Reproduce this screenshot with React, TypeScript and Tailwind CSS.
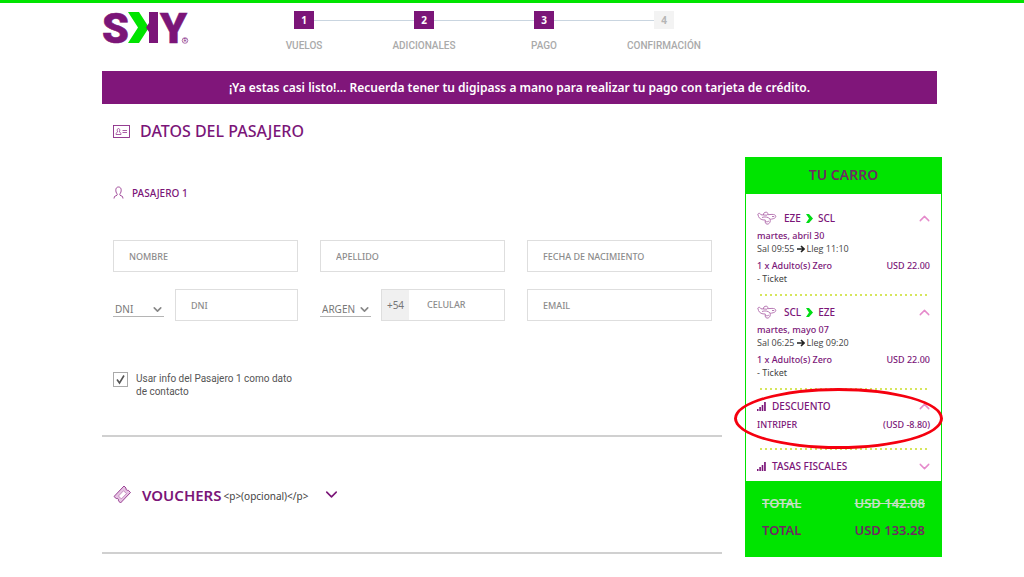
import { ChevronDown, ChevronUp } from "lucide-react";
import type { ReactNode } from "react";

const steps = [
  { id: 1, label: "VUELOS", done: true },
  { id: 2, label: "ADICIONALES", done: true },
  { id: 3, label: "PAGO", done: true },
  { id: 4, label: "CONFIRMACIÓN", done: false },
];

const flights = [
  { from: "EZE", to: "SCL", date: "martes, abril 30", departs: "Sal 09:55", arrives: "Lleg 11:10", price: "USD 22.00" },
  { from: "SCL", to: "EZE", date: "martes, mayo 07", departs: "Sal 06:25", arrives: "Lleg 09:20", price: "USD 22.00" },
];

function Logo() {
  return (
    <svg width="90" height="53" viewBox="0 0 90 53" role="img" aria-label="SKY">
      <g fill="#7b1578" stroke="#7b1578" strokeWidth="0.6" fontFamily="Roboto, sans-serif" fontWeight="900">
        <text x="0" y="40" fontSize="43">S</text>
        <text x="58" y="40" fontSize="43">Y</text>
      </g>
      <path d="M26 9h11l10 15.500L37 40H26l10-15.500z" fill="#00e400" />
      <path d="M47 9h9v31h-9v-11l-3-4.500 3-4.500z" fill="#7b1578" />
      <circle cx="83" cy="37.500" r="2.800" fill="none" stroke="#7b1578" strokeWidth="0.6" />
      <text x="81.500" y="39.300" fontSize="5" fill="#7b1578" fontFamily="Roboto, sans-serif">R</text>
    </svg>
  );
}

function IdCardIcon() {
  return (
    <svg className="shrink-0" width="17" height="13" viewBox="0 0 17 13" fill="none" stroke="#a14f9d" strokeWidth="0.9">
      <rect x="0.5" y="0.5" width="16" height="12" stroke="#8b2a87" />
      <path d="M3 9.5c0-1.6.8-2.4 1.7-2.6C3.8 5.600 4.200 3.500 5.500 3.500s1.700 2.100.8 3.400C7.300 7.100 8 8 8 9.500zM9.500 5.500h4.500M9.500 7.500h4.500" />
    </svg>
  );
}

function PersonIcon() {
  return (
    <svg className="shrink-0" width="11" height="14" viewBox="0 0 11 14" fill="none" stroke="#96398f" strokeWidth="0.9">
      <path d="M1 12.500l.5-2L4 9.200c.4-.3.3-1 0-1.400C2.400 6 2 1 5.500 1S8.600 6 7 7.800c-.3.400-.4 1.100 0 1.400l2.500 1.300.5 2" />
    </svg>
  );
}

function TicketIcon() {
  return (
    <svg className="shrink-0" width="19" height="19" viewBox="0 0 19 19" fill="none" stroke="#9a4395" strokeWidth="1">
      <path d="M1 11.500L11 1l2 2c-.4 1.500.8 2.700 2.300 2.300l2.200 2.200L7.500 18l-2-2.200c.5-1.500-.8-2.800-2.300-2.300z" fill="#e6c4e3" />
      <path d="M5.500 11l5-5.200 3 2.800-5.200 5.300z" strokeWidth="0.500" fill="#fff" />
    </svg>
  );
}

function PlaneIcon() {
  return (
    <svg className="shrink-0" width="20" height="14" viewBox="0 0 20 14" fill="none" stroke="#b06aab" strokeWidth="0.9" strokeLinejoin="round">
      <path d="M.8 3C1.800 1.800 3.200 2.200 4 3.800l2.500.2C6 2.500 7.500 1 9.300 1.200c1.500.2 1.900 1.200 1.200 2.500l4.500-.3c2.500 0 3.800.8 3.800 2 0 1.500-1.800 2.300-4.300 2.700L13 8.300c.8 2-.2 4-1.800 4.700-1.700.5-2.900-.5-3-2l.1-2C5 9.200 2.500 8 1.500 5.500z" />
      <path d="M6.500 4l3.500.2M5 6.500c2.500-1 6-.8 8 1.500M15 5.500h2.200M8.500 10.500c1 .5 2.500.3 3.500-.5" />
    </svg>
  );
}

function BarsIcon() {
  return (
    <svg className="shrink-0" width="9" height="9" viewBox="0 0 9 9" fill="#7b1578">
      <path d="M0 7h1.500v2H0zM2.300 5h1.600v4H2.300zM4.700 3h1.600v6H4.700zM7.100 0h1.700v9H7.100z" />
    </svg>
  );
}

function Field({ label }: { label: string }) {
  return (
    <input
      type="text"
      aria-label={label}
      placeholder={label}
      className="h-8 w-full min-w-0 border border-[#dedede] bg-white px-[15px] text-[9px] font-medium text-[#555] outline-none placeholder:text-[#8c8c8c]"
    />
  );
}

function SmallSelect({ label, value }: { label: string; value: string }) {
  return (
    <div className="mt-3 grid h-4 w-[51px] shrink-0 items-center border-b border-[#b5b5b5]">
      <select
        aria-label={label}
        className="col-start-1 row-start-1 w-full appearance-none bg-transparent pl-[2px] text-[10px] leading-4 text-[#777] outline-none"
      >
        <option>{value}</option>
      </select>
      <ChevronDown className="pointer-events-none col-start-1 row-start-1 justify-self-end text-[#888]" size={13} strokeWidth={3} />
    </div>
  );
}

function DottedLine() {
  return (
    <div className="ml-[3px] h-[2px] bg-[repeating-linear-gradient(90deg,#d6e65c_0_2px,transparent_2px_5px)]" />
  );
}

function CartHeading({ icon, children, open = true }: { icon: ReactNode; children: ReactNode; open?: boolean }) {
  const Chevron = open ? ChevronUp : ChevronDown;

  return (
    <button type="button" className="flex h-4 w-full items-center text-left text-[10px] font-medium text-[#7b1578]">
      {icon}
      {children}
      <Chevron className="-mr-[3px] ml-auto text-[#e58acb]" size={17} strokeWidth={2} />
    </button>
  );
}

function Cart() {
  return (
    <aside className="mt-[53px] w-[197px] shrink-0 border border-[#00e400] bg-white text-[9px] leading-[13px]">
      <h2 className="bg-[#00e400] pb-[2px] text-center text-sm leading-[34px] font-semibold text-[#6f2a62]">TU CARRO</h2>
      <div className="px-[11px] pt-2">
        {flights.map((flight) => (
          <section key={flight.from} className="pt-2">
            <CartHeading icon={<PlaneIcon />}>
              <span className="ml-[7px]">{flight.from}</span>
              <svg className="mx-[5px]" width="7" height="9" viewBox="0 0 7 9" fill="#00dc14">
                <path d="M0 0h3l4 4.500L3 9H0l3-4.500z" />
              </svg>
              <span>{flight.to}</span>
            </CartHeading>
            <p className="mt-[3px] font-medium text-[#7b1578]">{flight.date}</p>
            <p className="flex items-center gap-[2px] font-['Open_Sans',sans-serif] text-[#444]">
              {flight.departs}
              <svg width="8" height="8" viewBox="0 0 8 8" fill="none" stroke="#222" strokeWidth="1.600">
                <path d="M0 4h7M4 1l3 3-3 3" />
              </svg>
              {flight.arrives}
            </p>
            <p className="mt-1 flex justify-between font-medium text-[#7b1578]">
              <span>1 x Adulto(s) Zero</span>
              <span>{flight.price}</span>
            </p>
            <p className="mb-[9px] text-[#444]">- Ticket</p>
            <DottedLine />
          </section>
        ))}
        <section className="relative pt-2">
          <CartHeading icon={<BarsIcon />}>
            <span className="ml-[6px]">DESCUENTO</span>
          </CartHeading>
          <p className="mt-1 mb-[17px] flex justify-between font-medium text-[#7b1578]">
            <span>INTRIPER</span>
            <span>(USD -8.80)</span>
          </p>
          <DottedLine />
          <div className="pointer-events-none absolute -top-[2px] -right-[13px] -left-[23px] h-[61px] rounded-[50%] border-3 border-[#f5000f]" />
        </section>
        <section className="pt-2 pb-[7px]">
          <CartHeading icon={<BarsIcon />} open={false}>
            <span className="ml-[6px]">TASAS FISCALES</span>
          </CartHeading>
        </section>
      </div>
      <div className="bg-[#00e400] px-4 pt-[9px] pb-3 text-[13px] leading-[27px] font-semibold text-[#6f2a62]">
        <p className="flex justify-between text-[#c5dfc5] line-through">
          <span>TOTAL</span>
          <span>USD 142.08</span>
        </p>
        <p className="flex justify-between">
          <span>TOTAL</span>
          <span>USD 133.28</span>
        </p>
      </div>
    </aside>
  );
}

function Header() {
  return (
    <header className="flex h-[68px] items-start">
      <a href="#" className="shrink-0">
        <Logo />
      </a>
      <ol className="ml-[52px] grid w-[480px] grid-cols-4 pt-2">
        {steps.map((step, index) => (
          <li key={step.id} className="flex flex-col items-center">
            <div className="flex w-full items-center">
              <span className={`h-px flex-1 ${index > 0 ? "bg-[#c9d5e0]" : ""}`} />
              <span
                className={`h-[18px] w-5 text-center text-[10px] leading-[18px] font-bold ${
                  step.done ? "bg-[#7b1578] text-white" : "bg-[#f3f3f3] text-[#b5b5b5]"
                }`}
              >
                {step.id}
              </span>
              <span className={`h-px flex-1 ${index < steps.length - 1 ? "bg-[#c9d5e0]" : ""}`} />
            </div>
            <span className="mt-[9px] font-[Roboto,sans-serif] text-[10px] leading-4 font-medium text-[#aaa]">{step.label}</span>
          </li>
        ))}
      </ol>
    </header>
  );
}

function PassengerForm() {
  return (
    <form className="min-w-0 flex-1">
      <section className="border-b-2 border-[#d0d0d0] pr-[10px] pb-[37px] pl-[11px]">
        <h1 className="flex items-center gap-[10px] pt-4 text-base leading-[22px] font-medium text-[#7b1578]">
          <IdCardIcon />
          DATOS DEL PASAJERO
        </h1>
        <h2 className="mt-[42px] flex items-center gap-2 text-[10px] leading-[18px] font-medium text-[#7b1578]">
          <PersonIcon />
          PASAJERO 1
        </h2>
        <div className="mt-[38px] grid grid-cols-3 gap-x-[22px] gap-y-[17px]">
          <Field label="NOMBRE" />
          <Field label="APELLIDO" />
          <Field label="FECHA DE NACIMIENTO" />
          <div className="flex gap-[11px]">
            <SmallSelect label="Tipo de documento" value="DNI" />
            <Field label="DNI" />
          </div>
          <div className="flex gap-[10px]">
            <SmallSelect label="País" value="ARGEN" />
            <div className="flex min-w-0 flex-1 border border-[#dedede]">
              <span className="w-[27px] shrink-0 bg-[#f0f0f0] text-center text-[10px] leading-[30px] text-[#777]">+54</span>
              <input
                type="tel"
                aria-label="CELULAR"
                placeholder="CELULAR"
                className="w-full min-w-0 bg-white px-[18px] text-[9px] font-medium text-[#555] outline-none placeholder:text-[#8c8c8c]"
              />
            </div>
          </div>
          <Field label="EMAIL" />
        </div>
        <label className="mt-[51px] flex w-[190px] items-start gap-2 font-[Roboto,sans-serif] text-[10px] leading-[13px] text-[#555]">
          <span className="grid shrink-0">
            <input
              type="checkbox"
              defaultChecked
              className="peer col-start-1 row-start-1 size-[15px] appearance-none border border-[#aaa] bg-white"
            />
            <svg className="pointer-events-none invisible col-start-1 row-start-1 peer-checked:visible" width="15" height="15" viewBox="0 0 15 15" fill="none" stroke="#555" strokeWidth="1.600">
              <path d="M4 7.500l2.500 3.500L11 3.500" />
            </svg>
          </span>
          Usar info del Pasajero 1 como dato de contacto
        </label>
      </section>
      <section className="border-b-2 border-[#d0d0d0] px-[11px] py-[46px]">
        <button type="button" className="flex h-[23px] items-center text-[#7b1578]">
          <TicketIcon />
          <span className="ml-[10px] text-[15px] leading-6 font-semibold">VOUCHERS</span>
          <span className="ml-[2px] pt-1 text-[10px] text-[#444]">{"<p>(opcional)</p>"}</span>
          <ChevronDown className="ml-[14px]" size={19} />
        </button>
      </section>
    </form>
  );
}

export default function App() {
  return (
    <div className="min-h-screen border-t-3 border-[#00e400] bg-white pl-5 font-['Noto_Sans',sans-serif]">
      <div className="mx-auto w-full max-w-[840px]">
        <Header />
        <p className="mr-[5px] bg-[#80167a] text-center text-xs leading-[33px] font-semibold text-white">
          ¡Ya estas casi listo!... Recuerda tener tu digipass a mano para realizar tu pago con tarjeta de crédito.
        </p>
        <main className="flex items-start gap-[23px]">
          <PassengerForm />
          <Cart />
        </main>
      </div>
    </div>
  );
}
